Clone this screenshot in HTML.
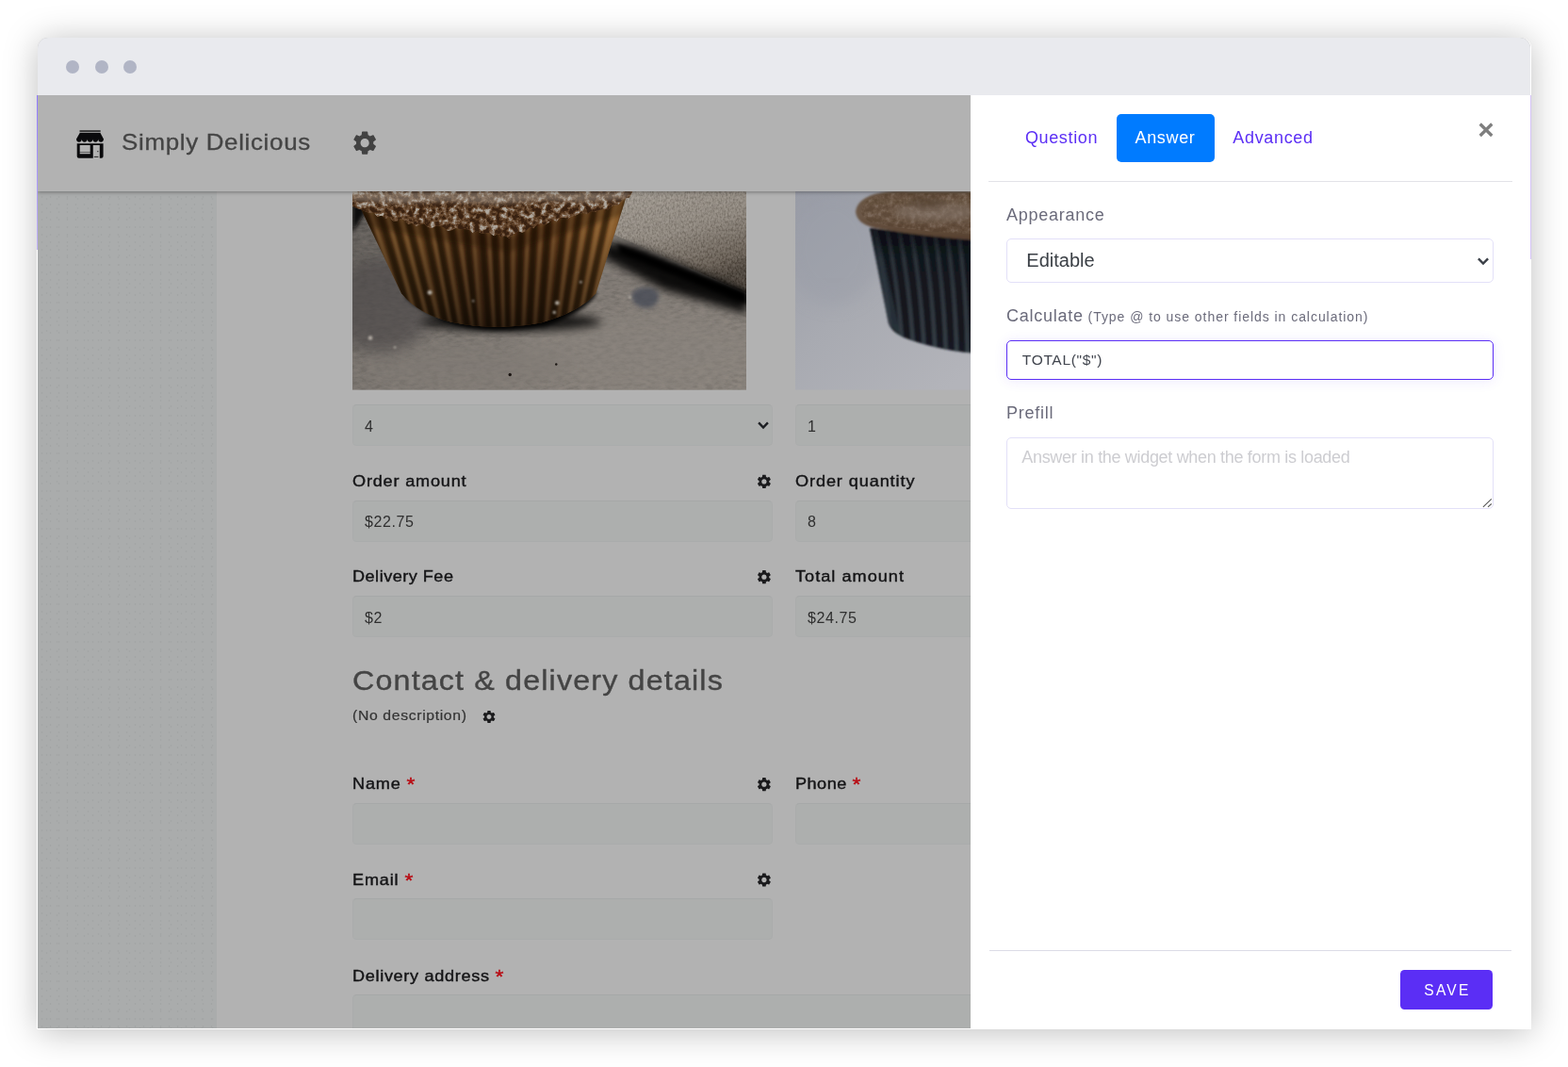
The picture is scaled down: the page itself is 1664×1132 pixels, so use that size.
<!DOCTYPE html>
<html lang="en">
<head>
<meta charset="utf-8">
<title>Simply Delicious</title>
<style>
*{box-sizing:border-box;margin:0;padding:0}
h1,h2,label,p,button,a{font:inherit;font-weight:normal;color:inherit;text-decoration:none;border:0;background:none;display:block}
html{width:1664px;height:1132px;background:#fff}
body{width:1664px;height:1132px;overflow:hidden;background:#fff}
body{font-family:"Liberation Sans",sans-serif;position:relative}
.abs{position:absolute}
.shadow{position:absolute;left:39.5px;top:40px;width:1585.3px;height:1051.8px;border-radius:11px 11px 0 0;background:#fff;box-shadow:0 3px 36px rgba(0,0,0,.26)}
.pstrip{position:absolute;width:1px;top:101px;background:linear-gradient(#8f78ff,#c3b4fb)}
.win{will-change:transform;position:absolute;left:40px;top:40px;width:1584.3px;height:1050.7px;border-radius:11px 11px 0 0;overflow:hidden;background:#b2b2b2}
.titlebar{position:absolute;left:0;top:0;width:100%;height:61px;background:#e9eaee}
.dot{position:absolute;top:24px;width:14.1px;height:14.1px;border-radius:50%;background:#b1b5c5}
.side{position:absolute;left:0;top:61px;width:189.6px;height:990px;background-color:#aaacac;background-image:radial-gradient(circle,#a3a5a5 .8px,transparent 1.2px),radial-gradient(circle,#a4a6a6 .8px,transparent 1.2px);background-size:9px 8px,11px 10px;background-position:0 0,4px 5px}
.hdr{position:absolute;left:0;top:61px;width:990px;height:102px;background:#b2b2b2;box-shadow:0 1px 4px rgba(0,0,0,.35)}
.brand{position:absolute;left:88.5px;top:96px;font-size:24px;line-height:30px;color:#444;-webkit-text-stroke:.3px #444;letter-spacing:.62px;white-space:nowrap;transform:scaleX(1.08);transform-origin:0 0}
.img{position:absolute;top:163.4px;height:210.4px;overflow:hidden}
.fld{position:absolute;height:44.4px;background:#adafae;border-radius:4.5px;border:1px solid #aaacac;border-top-color:#a6a8a8;font-size:16px;line-height:45px;color:#2f2f2f;padding-left:12px;white-space:nowrap;letter-spacing:.6px;overflow:hidden}
.lbl{position:absolute;font-size:16.7px;font-weight:normal;-webkit-text-stroke:.4px #141416;line-height:20px;color:#141416;white-space:nowrap;letter-spacing:.75px;transform:scaleX(1.085);transform-origin:0 0}
.req{color:#b80c14;-webkit-text-stroke:.45px #b80c14;font-weight:normal;font-size:21px;line-height:0;position:relative;top:2px;margin-left:.2px;letter-spacing:0}
.gear{position:absolute;width:15px;height:15px}
.h2{position:absolute;left:334px;top:664px;font-size:28.8px;line-height:36px;color:#444;-webkit-text-stroke:.35px #444;letter-spacing:1.03px;white-space:nowrap;transform:scaleX(1.12);transform-origin:0 0}
.desc{position:absolute;left:334px;top:709px;font-size:15px;line-height:20px;color:#333;-webkit-text-stroke:.2px #333;white-space:nowrap;letter-spacing:.62px;transform:scaleX(1.05);transform-origin:0 0}
.panel{position:absolute;left:990px;top:61px;width:595px;height:990px;background:#fff}
.tab{position:absolute;top:20px;height:51px;line-height:51px;font-size:18px;letter-spacing:.65px;color:#5b2ef5;white-space:nowrap;text-align:center}
.tab.act{background:#007bff;color:#fff;border-radius:5px}
.hr{position:absolute;height:1px;background:#e2e2e8}
.plbl{position:absolute;left:38px;font-size:18px;line-height:22px;color:#6b6b7b;letter-spacing:.75px;white-space:nowrap}
.plbl small{font-size:14px;letter-spacing:.95px;margin-left:-1px}
.pin{position:absolute;left:38.3px;width:516.7px;border:1px solid #e3e0f8;border-radius:5px;background:#fff;white-space:nowrap}
.save{position:absolute;left:456.2px;top:927.8px;width:98px;height:42.2px;border-radius:4.5px;background:#5b2ef5;color:#fff;font-size:15.6px;letter-spacing:2.2px;line-height:43px;text-align:center;text-indent:1.5px}
</style>
</head>
<body>
<svg width="0" height="0" style="position:absolute"><defs><symbol id="gear" viewBox="0 0 24 24"><path d="M19.14,12.94c0.04-0.3,0.06-0.61,0.06-0.94c0-0.32-0.02-0.64-0.07-0.94l2.03-1.58c0.18-0.14,0.23-0.41,0.12-0.61l-1.92-3.32c-0.12-0.22-0.37-0.29-0.59-0.22l-2.39,0.96c-0.5-0.38-1.03-0.7-1.62-0.94L14.4,2.81c-0.04-0.24-0.24-0.41-0.48-0.41h-3.84c-0.24,0-0.43,0.17-0.47,0.41L9.25,5.35C8.66,5.59,8.12,5.92,7.63,6.29L5.24,5.33c-0.22-0.08-0.47,0-0.59,0.22L2.74,8.87C2.62,9.08,2.66,9.34,2.86,9.48l2.03,1.58C4.84,11.36,4.8,11.69,4.8,12s0.02,0.64,0.07,0.94l-2.03,1.58c-0.18,0.14-0.23,0.41-0.12,0.61l1.92,3.32c0.12,0.22,0.37,0.29,0.59,0.22l2.39-0.96c0.5,0.38,1.03,0.7,1.62,0.94l0.36,2.54c0.05,0.24,0.24,0.41,0.48,0.41h3.84c0.24,0,0.44-0.17,0.47-0.41l0.36-2.54c0.59-0.24,1.13-0.56,1.62-0.94l2.39,0.96c0.22,0.08,0.47,0,0.59-0.22l1.92-3.32c0.12-0.22,0.07-0.47-0.12-0.61L19.14,12.94z M12,15.6c-1.98,0-3.6-1.62-3.6-3.6s1.62-3.6,3.6-3.6s3.6,1.62,3.6,3.6S13.98,15.6,12,15.6z"/></symbol></defs></svg>
<div class="shadow"></div>
<div class="pstrip" style="left:39px;height:164px"></div><div class="pstrip" style="left:39px;top:265px;height:827px;background:#fff"></div><div class="pstrip" style="left:1624.1px;top:275px;height:817px;background:#fff"></div>
<div class="pstrip" style="left:1624.1px;height:174px;background:#d5c4f6"></div>
<div class="win">
  <aside class="side"></aside>
  <main id="form">
<div class="img" id="img1" role="img" aria-label="Cupcake" style="left:334.2px;width:418.2px"><svg class="abs" style="left:0;top:0" width="418.5" height="210.6" viewBox="0 0 418 210" preserveAspectRatio="none"><defs><linearGradient id="a1" x1="0" y1="0" x2="1" y2=".9"><stop offset="0" stop-color="#4e4b49"/><stop offset=".32" stop-color="#6e6a66"/><stop offset=".65" stop-color="#827c77"/><stop offset="1" stop-color="#8a847e"/></linearGradient><linearGradient id="a2" x1="0" y1="0" x2=".42" y2="1"><stop offset="0" stop-color="#a59f97"/><stop offset=".5" stop-color="#8f8880"/><stop offset=".85" stop-color="#5e554c"/><stop offset="1" stop-color="#3a322b"/></linearGradient><linearGradient id="a3" x1="0" y1="0" x2="1" y2="0"><stop offset="0" stop-color="#4a3018"/><stop offset=".2" stop-color="#68441f"/><stop offset=".45" stop-color="#553318"/><stop offset=".7" stop-color="#5c3718"/><stop offset=".86" stop-color="#85582a"/><stop offset="1" stop-color="#9c6c34"/></linearGradient><linearGradient id="a4" x1="0" y1="0" x2="0" y2="1"><stop offset="0" stop-color="#000" stop-opacity="0"/><stop offset=".3" stop-color="#000" stop-opacity=".06"/><stop offset=".55" stop-color="#000" stop-opacity=".26"/><stop offset=".8" stop-color="#000" stop-opacity=".4"/><stop offset="1" stop-color="#000" stop-opacity=".6"/></linearGradient><filter id="b1" x="-10%" y="-10%" width="120%" height="120%"><feGaussianBlur stdDeviation="1"/></filter><filter id="b2" x="-20%" y="-20%" width="140%" height="140%"><feGaussianBlur stdDeviation="2"/></filter><filter id="b5" x="-30%" y="-30%" width="160%" height="160%"><feGaussianBlur stdDeviation="5"/></filter><filter id="b8" x="-30%" y="-50%" width="160%" height="200%"><feGaussianBlur stdDeviation="8"/></filter><filter id="tc" x="0" y="0" width="100%" height="100%" color-interpolation-filters="sRGB"><feTurbulence type="fractalNoise" baseFrequency=".17" numOctaves="4" seed="5"/><feColorMatrix type="matrix" values="2.6 0 0 0 -.95  2.6 0 0 0 -.95  2.6 0 0 0 -.95  0 0 0 0 1"/><feComponentTransfer><feFuncR type="table" tableValues=".22 .31 .4 .47 .58 .69"/><feFuncG type="table" tableValues=".13 .2 .28 .36 .52 .66"/><feFuncB type="table" tableValues=".07 .11 .18 .27 .46 .62"/></feComponentTransfer><feComposite in2="SourceGraphic" operator="in"/></filter><filter id="ts" x="0" y="0" width="100%" height="100%" color-interpolation-filters="sRGB"><feTurbulence type="fractalNoise" baseFrequency=".12 .3" numOctaves="4" seed="9"/><feColorMatrix type="matrix" values="2.2 0 0 0 -.6  2.2 0 0 0 -.6  2.2 0 0 0 -.6  0 0 0 0 1"/><feComponentTransfer><feFuncR type="table" tableValues=".38 .47 .53 .6"/><feFuncG type="table" tableValues=".36 .45 .5 .56"/><feFuncB type="table" tableValues=".33 .42 .47 .52"/></feComponentTransfer><feComposite in2="SourceGraphic" operator="in"/></filter><filter id="tw" x="0" y="0" width="100%" height="100%" color-interpolation-filters="sRGB"><feTurbulence type="fractalNoise" baseFrequency=".5 .35" numOctaves="2" seed="2"/><feColorMatrix type="matrix" values="2.2 0 0 0 -.6  2.2 0 0 0 -.6  2.2 0 0 0 -.6  0 0 0 0 1"/><feComponentTransfer><feFuncR type="table" tableValues=".30 .5 .62 .72"/><feFuncG type="table" tableValues=".27 .47 .59 .69"/><feFuncB type="table" tableValues=".23 .43 .55 .65"/></feComponentTransfer><feComposite in2="SourceGraphic" operator="in"/></filter><clipPath id="c1"><path d="M3 6 L292 0 L258 108 Q240 128 200 139 Q150 148 104 138 Q70 130 52 108 Z"/></clipPath><clipPath id="c0"><rect width="420" height="212"/></clipPath></defs><g clip-path="url(#c0)"><rect width="418" height="210" fill="url(#a1)"/><rect width="418" height="210" filter="url(#ts)" opacity=".3"/><ellipse cx="300" cy="170" rx="130" ry="40" fill="#8a847e" opacity=".5" filter="url(#b8)"/><ellipse cx="120" cy="185" rx="110" ry="25" fill="#807a75" opacity=".6" filter="url(#b8)"/><ellipse cx="30" cy="120" rx="55" ry="50" fill="#4e4a49" opacity=".7" filter="url(#b8)"/><path d="M0 0 L10 0 L14 22 L0 44 Z" fill="#0c0a0a" filter="url(#b2)"/><path d="M286 0 L418 0 L418 108 L278 46 Z" fill="url(#a2)"/><path d="M286 0 L418 0 L418 108 L278 46 Z" filter="url(#tw)" opacity=".28"/><path d="M266 54 L300 58 L418 106 L418 130 L330 104 L266 70 Z" fill="#050505" opacity=".9" filter="url(#b5)"/><path d="M280 55 L418 107 L418 120 L284 66 Z" fill="#000" filter="url(#b2)"/><path d="M296 108 Q302 100 314 102 Q326 103 324 114 Q322 125 308 123 Q296 121 296 108 Z" fill="#464c56" filter="url(#b2)" opacity=".8"/><ellipse cx="168" cy="138" rx="96" ry="10" fill="#000" opacity=".8" filter="url(#b5)"/><path d="M56 112 Q80 134 110 141 Q150 152 204 142 Q240 132 258 110 L256 100 L60 100 Z" fill="#060505" filter="url(#b2)"/><g clip-path="url(#c1)"><rect x="0" y="0" width="300" height="150" fill="url(#a3)"/><path d="M3.8 -2 L55.7 150 M21.7 -2 L66.2 150 M36 -2 L77.9 150 M50.7 -2 L88.8 150 M68.5 -2 L100.5 150 M82.4 -2 L110.2 150 M98.4 -2 L122.9 150 M116.8 -2 L131 150 M133.9 -2 L145 150 M148.6 -2 L155 150 M162.6 -2 L164.3 150 M180.1 -2 L175.3 150 M194.8 -2 L187.1 150 M210.1 -2 L198.9 150 M227.8 -2 L211 150 M244.1 -2 L221.3 150 M260 -2 L232.4 150 M275.8 -2 L242.2 150 M294 -2 L255.3 150" stroke="#180c04" stroke-width="6.4" opacity=".6" fill="none" filter="url(#b1)"/><path d="M11.8 -2 L61.3 150 M29.7 -2 L71.8 150 M44 -2 L83.5 150 M58.7 -2 L94.4 150 M76.5 -2 L106.1 150 M90.4 -2 L115.8 150 M106.4 -2 L128.5 150 M124.8 -2 L136.6 150 M141.9 -2 L150.6 150 M156.6 -2 L160.6 150 M170.6 -2 L169.9 150 M188.1 -2 L180.9 150 M202.8 -2 L192.7 150 M218.1 -2 L204.5 150 M235.8 -2 L216.6 150 M252.1 -2 L226.9 150 M268 -2 L238 150 M283.8 -2 L247.8 150 M302 -2 L260.9 150" stroke="#b08450" stroke-width="3.6" opacity=".38" fill="none" filter="url(#b1)"/><rect x="0" y="0" width="300" height="150" fill="url(#a4)"/><path d="M0 18 L60 30 L130 42 L166 48 L200 36 L296 4 L296 22 L200 52 L166 64 L130 58 L60 46 L0 34 Z" fill="#1a0c04" opacity=".35" filter="url(#b2)"/></g><path d="M0 0 L297 0 L293.5 6.5 L290 7.3 L286 9.3 L282 14.4 L278 14.8 L274 16.1 L270 20.2 L265.7 18.9 L261.4 19.7 L257.1 21.9 L252.9 21.3 L248.6 24.1 L244.3 22.9 L240 24 L236 25.7 L232 26.5 L228 29.3 L224 27.5 L220 28 L216 32.3 L212 29.3 L208 33.1 L204 35.3 L200 34.3 L196 34.6 L192 39.2 L188 37.9 L184 41.7 L180 43.9 L176 41.9 L171 45.1 L166 49.6 L162 47.2 L158 48.7 L154 45.2 L150 47.1 L145.6 43.9 L141.2 44.5 L136.8 44.5 L132.4 42.1 L128 44.4 L123.4 40.3 L118.8 39.9 L114.2 40 L109.6 38.8 L105 41.2 L100.8 41.7 L96.7 38.2 L92.5 36.5 L88.3 36.9 L84.2 38.8 L80 37.6 L75.8 34.1 L71.7 34.8 L67.5 36.8 L63.3 33.5 L59.2 34.8 L55 30.6 L51 28.6 L47 31.7 L43 31.2 L39 27.5 L35 28.7 L30.8 25.7 L26.6 26.7 L22.4 22.5 L18.2 22.8 L14 21.7 L9.3 19.1 L4.7 18 L0 15.6 L0 0 Z" fill="#68492c"/><path d="M0 0 L297 0 L293.5 6.5 L290 7.3 L286 9.3 L282 14.4 L278 14.8 L274 16.1 L270 20.2 L265.7 18.9 L261.4 19.7 L257.1 21.9 L252.9 21.3 L248.6 24.1 L244.3 22.9 L240 24 L236 25.7 L232 26.5 L228 29.3 L224 27.5 L220 28 L216 32.3 L212 29.3 L208 33.1 L204 35.3 L200 34.3 L196 34.6 L192 39.2 L188 37.9 L184 41.7 L180 43.9 L176 41.9 L171 45.1 L166 49.6 L162 47.2 L158 48.7 L154 45.2 L150 47.1 L145.6 43.9 L141.2 44.5 L136.8 44.5 L132.4 42.1 L128 44.4 L123.4 40.3 L118.8 39.9 L114.2 40 L109.6 38.8 L105 41.2 L100.8 41.7 L96.7 38.2 L92.5 36.5 L88.3 36.9 L84.2 38.8 L80 37.6 L75.8 34.1 L71.7 34.8 L67.5 36.8 L63.3 33.5 L59.2 34.8 L55 30.6 L51 28.6 L47 31.7 L43 31.2 L39 27.5 L35 28.7 L30.8 25.7 L26.6 26.7 L22.4 22.5 L18.2 22.8 L14 21.7 L9.3 19.1 L4.7 18 L0 15.6 L0 0 Z" filter="url(#tc)"/><path d="M0 0 L297 0 L290 8 L250 12 L200 10 L150 14 L100 11 L50 13 L0 10 Z" fill="#b5ada4" opacity=".45" filter="url(#b2)"/><g fill="#b5afa6" filter="url(#b1)"><circle cx="82" cy="107" r="2.4"/><circle cx="217" cy="118" r="2.2"/><circle cx="214" cy="128" r="1.6"/><circle cx="128" cy="116" r="1.1"/><circle cx="19" cy="155" r="2.2"/><circle cx="242" cy="96" r="1.2"/><circle cx="45" cy="165" r="1.3"/><circle cx="294" cy="112" r="1.5"/></g><g fill="#1a1512"><circle cx="167" cy="194" r="1.7"/><circle cx="216" cy="183" r="1.2"/></g></g></svg></div>
<div class="img" id="img2" role="img" aria-label="Chocolate cupcake" style="left:804.4px;width:200px"><svg class="abs" style="left:0;top:0" width="200" height="210.6" viewBox="0 0 200 210" preserveAspectRatio="none"><defs><linearGradient id="e1" x1="0" y1="0" x2=".8" y2="1"><stop offset="0" stop-color="#999ca6"/><stop offset=".5" stop-color="#a8aab1"/><stop offset="1" stop-color="#b3b4ba"/></linearGradient><linearGradient id="e2" x1="0" y1="0" x2="0" y2="1"><stop offset="0" stop-color="#665241"/><stop offset=".5" stop-color="#6b5746"/><stop offset="1" stop-color="#553f2e"/></linearGradient><linearGradient id="e3" x1="0" y1="0" x2="0" y2="1"><stop offset="0" stop-color="#04060a" stop-opacity=".75"/><stop offset=".25" stop-color="#04060a" stop-opacity=".3"/><stop offset="1" stop-color="#04060a" stop-opacity=".1"/></linearGradient><filter id="f1" x="-20%" y="-20%" width="140%" height="140%"><feGaussianBlur stdDeviation="1.2"/></filter><filter id="f3" x="-20%" y="-20%" width="140%" height="140%"><feGaussianBlur stdDeviation="3"/></filter><filter id="f8" x="-30%" y="-30%" width="160%" height="160%"><feGaussianBlur stdDeviation="9"/></filter><filter id="tm" x="0" y="0" width="100%" height="100%" color-interpolation-filters="sRGB"><feTurbulence type="fractalNoise" baseFrequency=".18" numOctaves="3" seed="4"/><feColorMatrix type="matrix" values="2.4 0 0 0 -.75  2.4 0 0 0 -.75  2.4 0 0 0 -.75  0 0 0 0 1"/><feComponentTransfer><feFuncR type="table" tableValues=".32 .38 .45 .55"/><feFuncG type="table" tableValues=".24 .30 .37 .48"/><feFuncB type="table" tableValues=".17 .23 .30 .43"/></feComponentTransfer><feComposite in2="SourceGraphic" operator="in"/></filter><clipPath id="c2"><path d="M79 39 L200 53 L200 172 Q170 170 150 165 Q128 160 114 154 Q102 148 99 140 Z"/></clipPath><clipPath id="c3"><rect width="187" height="212"/></clipPath></defs><g clip-path="url(#c3)"><rect width="200" height="210" fill="url(#e1)"/><ellipse cx="40" cy="60" rx="50" ry="60" fill="#9a9da7" opacity=".5" filter="url(#f8)"/><g filter="url(#f1)"><path d="M79 39 L200 53 L200 172 Q170 170 150 165 Q128 160 114 154 Q102 148 99 140 Z" fill="#171c23"/><g clip-path="url(#c2)"><path d="M84 36 Q97.5 100 103 175 M96.6 36 Q109.5 100 114.4 175 M109.2 36 Q121.5 100 125.8 175 M121.8 36 Q133.5 100 137.2 175 M134.4 36 Q145.5 100 148.6 175 M147 36 Q157.5 100 160 175 M159.6 36 Q169.5 100 171.4 175 M172.2 36 Q181.5 100 182.8 175 M184.8 36 Q193.5 100 194.2 175 M197.4 36 Q205.5 100 205.6 175" stroke="#47505a" stroke-width="4.4" fill="none" opacity=".75"/><path d="M79 39 L87 39 L112 153 L99 140 Z" fill="#39444f" opacity=".7"/><rect x="70" y="36" width="130" height="140" fill="url(#e3)"/></g><path d="M64 22 Q65 9 84 3 Q100 -1 120 0 L200 0 L200 52 Q140 49 92 40 Q66 37 64 22 Z" fill="url(#e2)"/></g><path d="M70 22 Q70 10 86 5 Q100 1 120 2 L200 2 L200 46 Q140 44 94 36 Q72 33 70 22 Z" filter="url(#tm)" opacity=".45"/><ellipse cx="150" cy="22" rx="45" ry="10" fill="#8a7b71" opacity=".5" filter="url(#f3)"/><ellipse cx="140" cy="12" rx="18" ry="6" fill="#4f3c2d" opacity=".6" filter="url(#f3)"/></g></svg></div>
<div class="fld" role="combobox" style="left:334px;top:389px;width:446px">4</div>
<div class="fld" role="combobox" style="left:804px;top:389px;width:446px">1</div>
<label class="lbl" style="left:334px;top:461px">Order amount</label>
<label class="lbl" style="left:804px;top:461px;letter-spacing:.83px">Order quantity</label>
<div class="fld" role="textbox" style="line-height:44px;left:334px;top:490.5px;width:446px">$22.75</div>
<div class="fld" role="textbox" style="line-height:44px;left:804px;top:490.5px;width:446px">8</div>
<label class="lbl" style="left:334px;top:562px;letter-spacing:.45px">Delivery Fee</label>
<label class="lbl" style="left:804px;top:562px;letter-spacing:.95px">Total amount</label>
<div class="fld" role="textbox" style="left:334px;top:592px;width:446px">$2</div>
<div class="fld" role="textbox" style="left:804px;top:592px;width:446px">$24.75</div>
<h2 class="h2">Contact &amp; delivery details</h2>
<p class="desc">(No description)</p>
<label class="lbl" style="left:334px;top:782px">Name <span class="req">*</span></label>
<label class="lbl" style="left:804px;top:782px;letter-spacing:.45px">Phone <span class="req">*</span></label>
<div class="fld" role="textbox" style="left:334px;top:812px;width:446px"></div>
<div class="fld" role="textbox" style="left:804px;top:812px;width:446px"></div>
<label class="lbl" style="left:334px;top:884px">Email <span class="req">*</span></label>
<div class="fld" role="textbox" style="left:334px;top:913px;width:446px"></div>
<label class="lbl" style="left:334px;top:986px;letter-spacing:.62px">Delivery address <span class="req">*</span></label>
<div class="fld" role="textbox" style="left:334px;top:1015px;width:916px;height:60px"></div>
<svg class="abs" style="left:762.6px;top:406.25px" width="14" height="10" viewBox="-7 -5 14 10"><path d="M-4.9 -2.6 L0 2.5 L4.9 -2.6" stroke="#1c1e22" stroke-width="2.4" fill="none"/></svg>
<svg class="abs" style="left:761px;top:461px" width="21" height="21" fill="#1b1b1d"><use href="#gear" x="1.00" y="1.00" width="17.80" height="17.80"/></svg>
<svg class="abs" style="left:761px;top:562px" width="21" height="21" fill="#1b1b1d"><use href="#gear" x="1.00" y="1.30" width="17.80" height="17.80"/></svg>
<svg class="abs" style="left:761px;top:782px" width="21" height="21" fill="#1b1b1d"><use href="#gear" x="1.00" y="1.30" width="17.80" height="17.80"/></svg>
<svg class="abs" style="left:761px;top:883px" width="21" height="21" fill="#1b1b1d"><use href="#gear" x="1.00" y="1.60" width="17.80" height="17.80"/></svg>
<svg class="abs" style="left:469px;top:711px" width="20" height="20" fill="#1b1b1d"><use href="#gear" x="1.80" y="1.30" width="16.40" height="16.40"/></svg>
</main>
  <header class="hdr"></header>
  <div id="hdrc">
<svg class="abs" style="left:41.2px;top:98px" width="29.2" height="30" viewBox="0 0 29.2 30">
<rect x="3.5" y="0.1" width="22.2" height="2.2" fill="#3a3a3a"/>
<path d="M3.7 3 L25.5 3 L29 9.6 A2.9 3.1 0 0 1 23.2 9.6 A2.9 3.1 0 0 1 17.4 9.6 A2.9 3.1 0 0 1 11.6 9.6 A2.9 3.1 0 0 1 5.8 9.6 A2.9 3.1 0 0 1 0 9.6 Z" fill="#0a0a0c"/>
<path fill-rule="evenodd" d="M0.7 14.2 H28.6 V27.8 A2 2 0 0 1 26.6 29.8 H24.8 V15.9 H17.8 V29.8 H2.7 A2 2 0 0 1 0.7 27.8 Z M3.7 15.9 H14.7 V23.5 H3.7 Z M3.7 24 H14.7 V25.2 H3.7 Z" fill="#0a0a0c"/>
<rect x="18.8" y="27.9" width="4.6" height="0.9" fill="#1a1a1a"/>
<rect x="22.3" y="22.1" width="1.1" height="1.1" fill="#1a1a1a"/>
</svg>
<h1 class="brand">Simply Delicious</h1>
<svg class="abs" style="left:330px;top:95px" width="34" height="34" fill="#424242"><use href="#gear" x="1.95" y="1.45" width="30.40" height="30.40"/></svg>
</div>
  <section class="panel" id="panel">
<button type="button" class="tab" style="left:38.5px;width:116px">Question</button>
<button type="button" class="tab act" style="left:154.5px;width:104px">Answer</button>
<button type="button" class="tab" style="left:259px;width:124px">Advanced</button>
<svg class="abs" style="left:539px;top:29px" width="16" height="16" viewBox="0 0 16 16"><path d="M1.72 1.47 L14.28 14.03 M14.28 1.47 L1.72 14.03" stroke="#7f7f7f" stroke-width="3.3" fill="none"/></svg>
<div class="hr" style="left:19px;top:91px;width:556px"></div>
<label class="plbl" style="top:115.5px">Appearance</label>
<div class="pin" role="combobox" style="top:152px;height:47px;font-size:20px;line-height:45px;padding-left:20px;color:#3a3f45">Editable</div>
<svg class="abs" style="left:537.35px;top:170.8px" width="14" height="10" viewBox="-7 -5 14 10"><path d="M-5.1 -2.6 L0 2.5 L5.1 -2.6" stroke="#3a3f47" stroke-width="2.4" fill="none"/></svg>
<label class="plbl" style="top:223.25px">Calculate <small>(Type @ to use other fields in calculation)</small></label>
<div class="pin" role="textbox" style="top:260px;height:42px;font-size:15.5px;line-height:40px;padding-left:15.5px;color:#41454e;letter-spacing:.67px;border:1.3px solid #5b2ef5;box-shadow:0 1px 14px rgba(91,46,245,.1)">TOTAL("$")</div>
<label class="plbl" style="top:326.25px">Prefill</label>
<div class="pin" role="textbox" style="top:363px;height:76px;font-size:18px;letter-spacing:-.32px;line-height:22px;padding:9px 15px;color:#cdcdd1">Answer in the widget when the form is loaded</div>
<svg class="abs" id="resize" style="left:540px;top:425px" width="14" height="14" viewBox="540 425 14 14"><path d="M543.9 436.8 L552.8 428.4 M549 436.8 L552.8 433.5" stroke="#555" stroke-width="1.1" fill="none"/></svg>
<div class="hr" style="left:20px;top:907px;width:554px;background:#dcdce6"></div>
<button type="button" class="save">SAVE</button>
</section>
  <div class="titlebar"><div class="dot" style="left:30.1px"></div><div class="dot" style="left:60.8px"></div><div class="dot" style="left:90.8px"></div></div>
</div>
</body>
</html>
